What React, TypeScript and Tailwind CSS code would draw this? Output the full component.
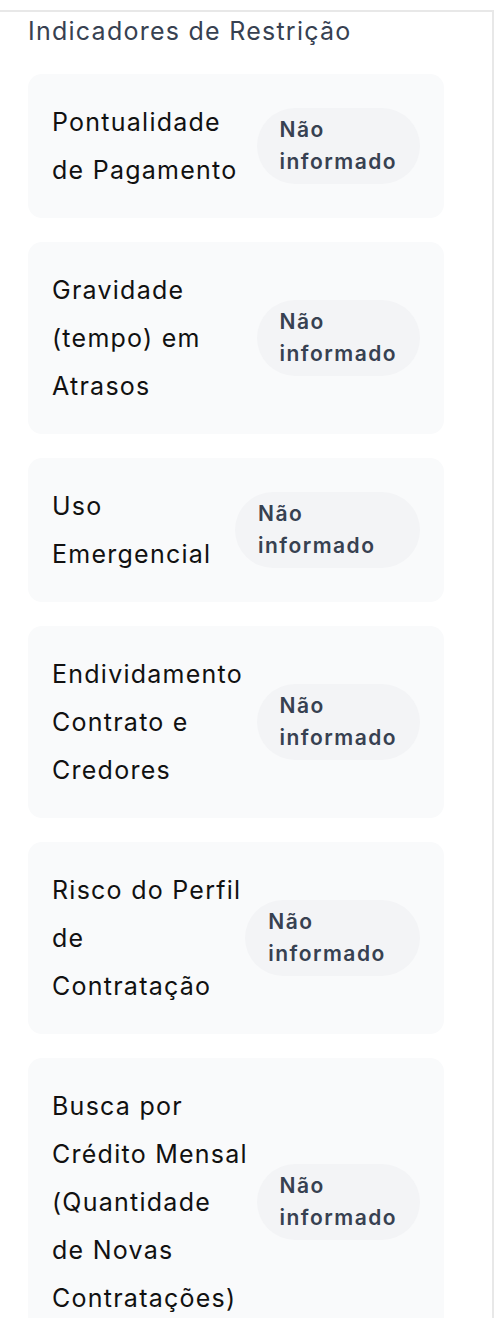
const indicators = [
  'Pontualidade de Pagamento',
  'Gravidade (tempo) em Atrasos',
  'Uso Emergencial',
  'Endividamento Contrato e Credores',
  'Risco\u00a0do\u00a0Perfil\nde\nContratação',
  'Busca por Crédito Mensal (Quantidade\nde Novas Contratações)',
]

function IndicatorCard({ label }: { label: string }) {
  return (
    <div className="flex items-center gap-1 rounded-[14px] bg-[#f9fafb] p-6">
      <span className="whitespace-pre-line text-[25px] leading-[48px] tracking-[0.05em] text-[#111111]">
        {label}
      </span>
      <span className="rounded-full bg-[#f3f4f6] px-[23px] py-[6px] text-[21px] font-semibold leading-[32px] tracking-[0.07em] text-[#374151]">
        Não informado
      </span>
    </div>
  )
}

export default function App() {
  return (
    <div className="h-[1318px] overflow-hidden bg-white font-['Inter',sans-serif]">
      <div className="mt-[10px] w-[494px] border-t-2 border-r-2 border-[#e8e8e8] pl-7 pt-[1px]">
        <h2 className="text-[25px] font-normal leading-[36px] tracking-[0.05em] text-[#374151]">
          Indicadores de Restrição
        </h2>
        <div className="mt-[25px] flex w-[416px] flex-col gap-6">
          {indicators.map((label) => (
            <IndicatorCard key={label} label={label} />
          ))}
        </div>
      </div>
    </div>
  )
}
